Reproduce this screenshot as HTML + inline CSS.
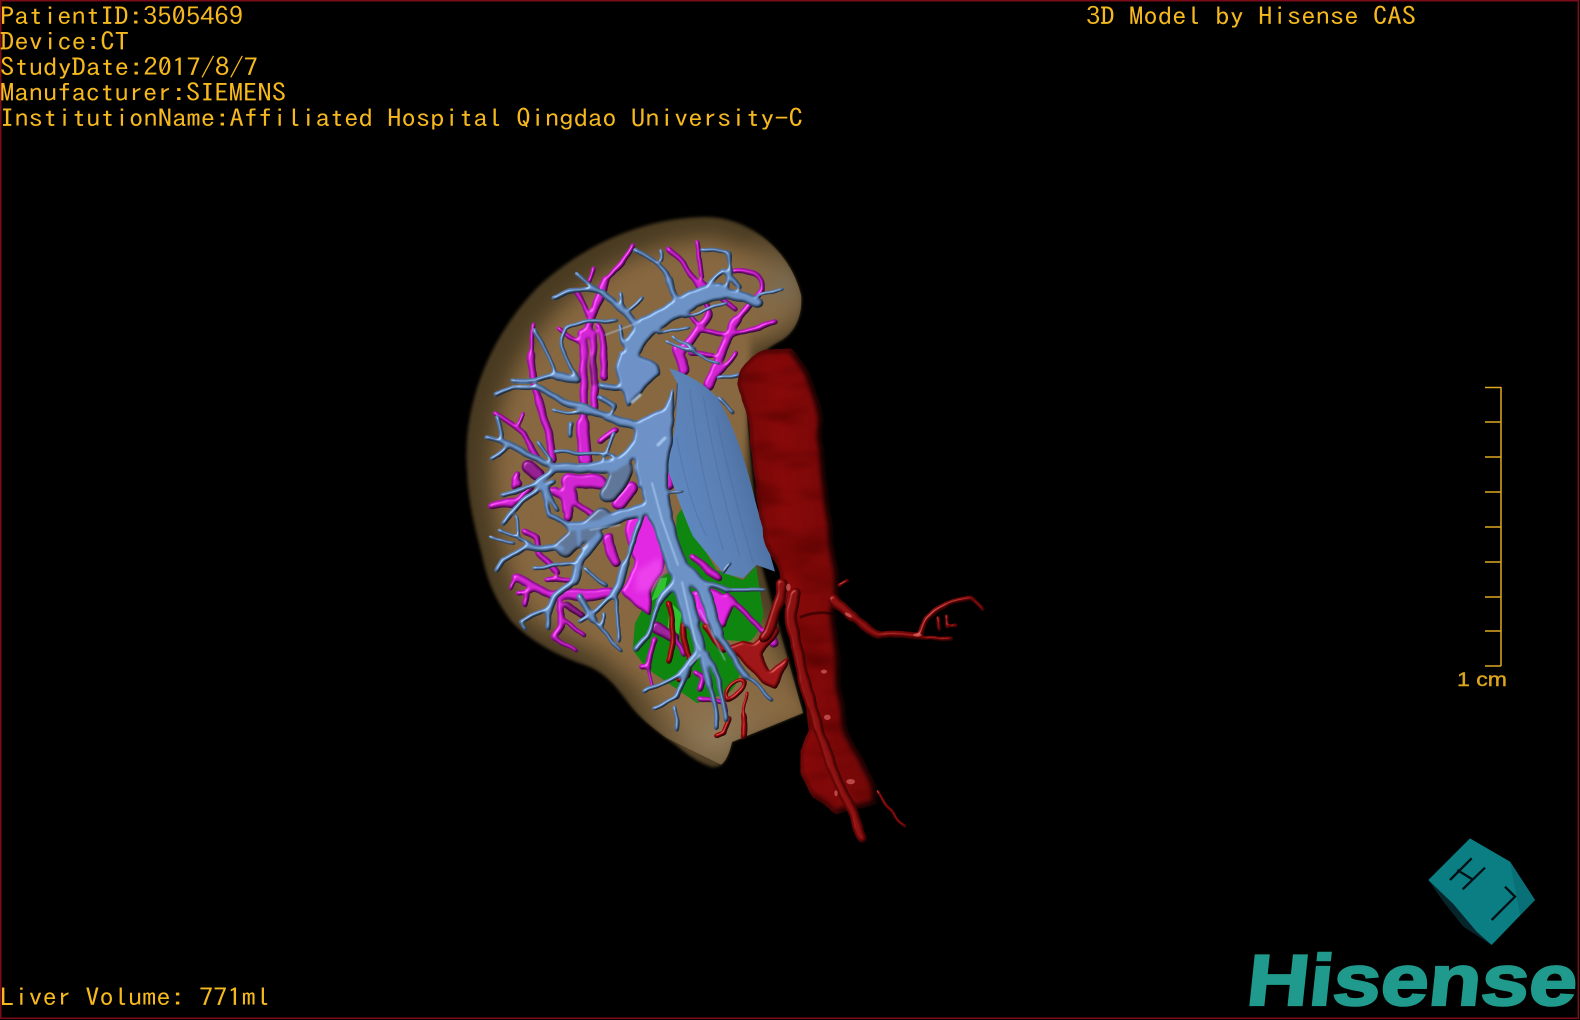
<!DOCTYPE html>
<html lang="en">
<head>
<meta charset="utf-8">
<title>3D Model by Hisense CAS</title>
<style>
html,body{margin:0;padding:0;background:#000;width:1580px;height:1020px;overflow:hidden}
svg{display:block;position:absolute;left:0;top:0}
.t{font-family:"IPAGothic","Liberation Mono",monospace;font-size:24.5px;fill:#f5b81e}
</style>
</head>
<body>
<svg width="1580" height="1020" viewBox="0 0 1580 1020" xmlns="http://www.w3.org/2000/svg">
<defs>
<clipPath id="liverClip"><path d="M467 470C462 405 490 335 540 285C590 240 650 217 707 217C750 218 790 250 801 295C803 315 795 332 782 340C760 352 745 365 745 395L760 560L803 713L732 742C728 760 722 768 712 767C700 763 690 757 676 745C655 730 640 718 630 705C615 685 605 672 585 665C555 655 530 640 512 622C495 600 487 580 482 555C474 525 468 500 467 470Z"/></clipPath>
<filter id="tube" filterUnits="userSpaceOnUse" x="0" y="0" width="1580" height="1020" color-interpolation-filters="sRGB">
  <feTurbulence type="fractalNoise" baseFrequency=".04" numOctaves="2" seed="7" result="n"/>
  <feDisplacementMap in="SourceGraphic" in2="n" scale="6" xChannelSelector="R" yChannelSelector="G" result="d"/>
  <feGaussianBlur in="d" stdDeviation="1" result="g0"/>
  <feColorMatrix in="g0" type="matrix" values="1 0 0 0 0  0 1 0 0 0  0 0 1 0 0  0 0 0 7 -1.6" result="g"/>
  <feGaussianBlur in="g" stdDeviation="1.5" result="b"/>
  <feDiffuseLighting in="b" surfaceScale="3" diffuseConstant="1.08" lighting-color="#ffffff" result="dl">
    <feDistantLight azimuth="225" elevation="68"/>
  </feDiffuseLighting>
  <feComposite in="g" in2="dl" operator="arithmetic" k1="1" k2="0" k3="0" k4="0" result="shaded"/>
  <feSpecularLighting in="b" surfaceScale="3" specularConstant=".9" specularExponent="22" lighting-color="#ffffff" result="s">
    <feDistantLight azimuth="225" elevation="40"/>
  </feSpecularLighting>
  <feComposite in="s" in2="g" operator="in" result="s2"/>
  <feComposite in="shaded" in2="s2" operator="arithmetic" k1="0" k2="1" k3=".4" k4="0"/>
</filter>
<filter id="aoF" filterUnits="userSpaceOnUse" x="0" y="0" width="1580" height="1020" color-interpolation-filters="sRGB">
  <feTurbulence type="fractalNoise" baseFrequency=".03" numOctaves="2" seed="3" result="n"/>
  <feDisplacementMap in="SourceGraphic" in2="n" scale="5" xChannelSelector="R" yChannelSelector="G" result="d"/>
  <feGaussianBlur in="d" stdDeviation="1" result="g0"/>
  <feColorMatrix in="g0" type="matrix" values="1 0 0 0 0  0 1 0 0 0  0 0 1 0 0  0 0 0 7 -1.6" result="g"/>
  <feGaussianBlur in="g" stdDeviation="4" result="b"/>
  <feDiffuseLighting in="b" surfaceScale="9" diffuseConstant="1.08" lighting-color="#ffffff" result="dl">
    <feDistantLight azimuth="200" elevation="68"/>
  </feDiffuseLighting>
  <feComposite in="g" in2="dl" operator="arithmetic" k1="1" k2="0" k3="0" k4="0"/>
</filter>
<filter id="soft" filterUnits="userSpaceOnUse" x="0" y="0" width="1580" height="1020"><feGaussianBlur stdDeviation="11"/></filter>
<filter id="soft2" filterUnits="userSpaceOnUse" x="0" y="0" width="1580" height="1020"><feGaussianBlur stdDeviation="1.5"/></filter>
<filter id="soft3" filterUnits="userSpaceOnUse" x="0" y="0" width="1580" height="1020"><feGaussianBlur stdDeviation="3"/></filter>
<filter id="soft1" filterUnits="userSpaceOnUse" x="0" y="0" width="1580" height="1020"><feGaussianBlur stdDeviation=".7"/></filter>
<filter id="rough" filterUnits="userSpaceOnUse" x="-4000" y="-4000" width="10000" height="10000" color-interpolation-filters="sRGB">
  <feTurbulence type="fractalNoise" baseFrequency=".006 .016" numOctaves="2" seed="4" result="n"/>
  <feColorMatrix in="n" type="matrix" values="0 0 0 0 .3  0 0 0 0 0  0 0 0 0 0  1.4 0 0 0 -.62" result="c"/>
  <feComposite in="c" in2="SourceAlpha" operator="in" result="c2"/>
  <feMerge><feMergeNode in="SourceGraphic"/><feMergeNode in="c2"/></feMerge>
</filter>
<linearGradient id="ivc" gradientUnits="userSpaceOnUse" x1="620" y1="800" x2="900" y2="720">
  <stop offset="0" stop-color="#5f88c0"/><stop offset=".55" stop-color="#5a7fb3"/><stop offset="1" stop-color="#48699a"/>
</linearGradient>
<linearGradient id="ao" gradientUnits="userSpaceOnUse" x1="60" y1="500" x2="360" y2="480">
  <stop offset="0" stop-color="#720707"/><stop offset=".45" stop-color="#880909"/><stop offset="1" stop-color="#760808"/>
</linearGradient>
<radialGradient id="lowfade" gradientUnits="userSpaceOnUse" cx="715" cy="735" r="100">
  <stop offset="0" stop-color="#8e7a5a" stop-opacity=".95"/><stop offset="1" stop-color="#87673f" stop-opacity="0"/>
</radialGradient>
<radialGradient id="topfade" gradientUnits="userSpaceOnUse" cx="785" cy="285" r="65">
  <stop offset="0" stop-color="#7b6c53" stop-opacity=".9"/><stop offset="1" stop-color="#87673f" stop-opacity="0"/>
</radialGradient>
</defs>

<!-- frame -->
<rect x=".75" y=".75" width="1577.5" height="1017.5" fill="none" stroke="#7a0c18" stroke-width="1.5"/>

<!-- liver -->
<path filter="url(#soft2)" fill="#4a3a24" d="M467 470C462 405 490 335 540 285C590 240 650 217 707 217C750 218 790 250 801 295C803 315 795 332 782 340C760 352 745 365 745 395L760 560L803 713L732 742C728 760 722 768 712 767C700 763 690 757 676 745C655 730 640 718 630 705C615 685 605 672 585 665C555 655 530 640 512 622C495 600 487 580 482 555C474 525 468 500 467 470Z"/>
<g clip-path="url(#liverClip)">
<path filter="url(#soft)" fill="#87673f" d="M492 470C492 405 520 345 562 305C610 262 660 240 710 238C750 245 790 270 800 300C795 325 770 335 745 350L730 400L750 600L820 720L700 750L640 690L600 655L530 620C505 575 492 520 492 470Z"/>
<path fill="#87673f" filter="url(#soft3)" d="M530 470C530 410 560 345 610 305L740 280L750 350L740 620L700 680L600 640L550 580Z"/>
<path fill="url(#lowfade)" d="M590 650L690 620L810 713L732 770L630 720Z"/>
<rect fill="url(#topfade)" x="700" y="210" width="110" height="140"/>
</g>

<!-- green -->
<g transform="translate(460,480) scale(.3333)">
<path fill="#0f860f" d="M650 110C660 90 680 70 690 70L705 160L770 270L850 300L888 258L910 400C905 440 885 480 862 486L800 480L840 580C830 620 810 640 800 640L712 670L640 620L560 565L518 510L525 430L600 290L622 280L642 270Z"/>
<path fill="#2bc62b" d="M572 365L600 295L622 292L612 340ZM632 368L665 400L655 470L622 450Z"/>
<path fill="#1ba81b" d="M690 100L715 145L730 190L700 160Z"/>
</g>

<!-- magenta vessels -->
<g filter="url(#tube)" fill="none" stroke="#c81cc8" stroke-linecap="round" stroke-linejoin="round">
<g transform="translate(460,210) scale(.3333)">
  <path stroke-width="40" d="M378 750L368 640"/>
  <path stroke-width="22" d="M368 640Q372 500 368 370"/>
  <path stroke-width="20" d="M402 600Q404 480 395 370"/>
  <path stroke="#8c1788" stroke-width="14" d="M400 520L398 440"/>
  <path stroke-width="18" d="M430 500Q442 420 415 350"/>
  <path stroke-width="20" d="M378 375Q400 310 430 240"/>
  <path stroke-width="24" d="M430 240L440 212"/>
  <path stroke-width="12" d="M440 212Q480 180 517 112"/>
  <path stroke-width="14" d="M385 320Q370 260 345 245"/>
  <path stroke-width="10" d="M390 215L402 172M296 352L360 395"/>
  <path stroke-width="22" d="M278 750Q265 650 235 570"/>
  <path stroke-width="18" d="M235 570Q210 500 214 430"/>
  <path stroke-width="10" d="M214 430L220 342"/>
  <path stroke-width="15" d="M110 610Q170 640 205 700L235 750"/>
  <path stroke-width="10" d="M170 650L190 610"/>
  <path stroke="#8c1788" stroke-width="40" d="M205 770L235 795"/>
  <path stroke-width="16" d="M170 790L160 830M285 840L345 870M215 830L175 870L95 884"/>
  <path stroke-width="40" d="M320 812L420 815"/>
  <path stroke-width="24" d="M318 815L318 900"/>
  <path stroke-width="16" d="M425 690L470 660"/>
  <path stroke-width="38" d="M510 835L475 885"/>
  <path stroke-width="24" d="M628 770L625 830"/>
  <path stroke-width="30" d="M672 480L652 420"/>
  <path stroke-width="24" d="M665 420Q712 380 745 310"/>
  <path stroke-width="14" d="M745 310Q735 220 625 115"/>
  <path stroke-width="11" d="M725 200L712 95"/>
  <path stroke-width="12" d="M722 215L825 298"/>
  <path stroke-width="30" d="M745 525L770 470"/>
  <path stroke-width="26" d="M770 470L800 390L830 330"/>
  <path stroke-width="16" d="M830 330L905 240"/>
  <path stroke-width="12" d="M905 240Q920 180 820 185"/>
  <path stroke-width="13" d="M800 380L895 355L945 335"/>
  <path stroke-width="12" d="M720 362L795 375M690 430L760 430M770 500L830 432"/>
  <path stroke-width="10" d="M658 285L710 340"/>
</g>
<g transform="translate(460,480) scale(.3333)">
  <path stroke-width="22" d="M175 10L165 -5M330 0L322 115"/>
  <path stroke-width="16" d="M270 30L330 60L400 105M345 35L345 70"/>
  <path stroke-width="17" d="M160 75L95 75"/>
  <path stroke-width="16" d="M195 155L235 170L240 220L290 280"/>
  <path stroke-width="26" d="M445 170Q450 220 470 250"/>
  <path stroke-width="28" d="M510 30L475 80"/>
  <path stroke-width="30" d="M452 342L360 345L280 345"/>
  <path stroke-width="22" d="M280 345Q220 320 170 290"/>
  <path stroke-width="12" d="M170 290L155 325M200 345L195 375M180 340L210 330"/>
  <path stroke-width="12" d="M260 298L335 300"/>
  <path stroke="#8c1788" stroke-width="16" d="M320 375L365 405"/>
  <path stroke-width="17" d="M300 370L305 440L285 470"/>
  <path stroke-width="11" d="M285 470L350 512M310 420L375 465"/>
  <path fill="#d81ed8" stroke="none" d="M500 130C510 110 535 85 555 80C585 100 595 130 600 170C612 210 615 240 605 270C590 300 572 320 575 350L572 405C555 400 520 370 490 345L480 335C495 310 530 260 530 240C510 210 495 170 500 130Z"/>
  <path fill="#d81ed8" stroke="none" d="M698 335L745 325L830 362L795 440L740 440L712 400Z"/>
  <path stroke-width="18" d="M700 232L775 295"/>
  <path stroke-width="14" d="M800 345L860 400L930 480"/>
  <path stroke-width="24" d="M925 445L938 490"/>
  <path stroke-width="10" d="M680 40L720 80L745 120"/>
  <path stroke="#951993" stroke-width="30" d="M590 445L640 470"/>
  <path stroke-width="12" d="M640 470L672 525"/>
  <path stroke-width="14" d="M585 480L562 555"/>
  <path stroke-width="14" d="M545 560L565 560"/>
  <path stroke-width="6" d="M565 570L580 625"/>
  <path stroke-width="16" d="M705 580L732 590L722 630"/>
  <path stroke-width="12" d="M720 658L790 670L795 695"/>
</g>
</g>
<path fill="#f048f0" filter="url(#soft3)" opacity=".75" d="M636 572L660 557L665 570L652 590L636 592Z"/>

<!-- small arteries behind blue -->
<g filter="url(#tube)" fill="none" stroke="#a50f12" stroke-linecap="round" stroke-linejoin="round">
<g transform="translate(460,480) scale(.3333)">
  <path stroke-width="14" d="M628 372Q645 470 630 540"/>
  <path stroke-width="14" d="M672 430Q660 490 690 530L680 590L655 600"/>
  <path stroke-width="18" d="M738 440L790 510"/>
  <path stroke-width="9" d="M800 660C800 610 850 590 855 605C862 630 820 655 800 660Z"/>
  <path stroke-width="11" d="M805 715L795 755L770 765"/>
  <path stroke-width="6" d="M862 640L850 700"/>
  <path stroke-width="16" d="M852 705L850 765"/>
  <path fill="#950d0f" stroke="none" d="M945 430L960 450L905 520L925 575L985 530L980 560L945 628L905 610L840 530L795 500L845 485L880 490L905 460Z"/>
</g>
</g>

<!-- IVC cylinder -->
<g transform="translate(460,210) scale(.3333)">
<path fill="url(#ivc)" d="M628 475C680 490 730 520 770 560C820 640 860 760 885 870L945 1085L890 1065L850 1105L790 1090L700 980C675 930 645 840 620 770C640 700 655 600 652 520Z"/>
<g fill="none" stroke="#3f6090" stroke-width="4" opacity=".28">
  <path d="M690 540Q720 800 790 1020M730 560Q770 800 840 1040M770 620Q810 820 880 1060M650 680Q680 860 740 980"/>
</g>
<path fill="none" stroke="#2f4c74" stroke-width="3" d="M652 520C650 590 640 620 620 650"/>
</g>

<!-- blue hepatic tree -->
<g filter="url(#tube)" fill="none" stroke="#6288bc" stroke-linecap="round" stroke-linejoin="round">
<g transform="translate(460,210) scale(.3333)">
  <path stroke="#566d90" stroke-width="56" d="M490 780L445 850"/>
  <path stroke-width="18" d="M530 345L490 300L430 250"/>
  <path stroke-width="12" d="M430 250Q360 225 280 262"/>
  <path stroke-width="9" d="M440 260L350 190M495 310L480 250M510 300L550 265"/>
  <path stroke-width="56" d="M520 410L560 350L640 300"/>
  <path stroke-width="50" d="M640 300L700 265L780 245"/>
  <path stroke-width="32" d="M780 245L860 262L890 280"/>
  <path stroke-width="18" d="M650 265L630 210"/>
  <path stroke-width="11" d="M630 210Q600 150 525 125"/>
  <path stroke-width="8" d="M600 150L602 118M725 120L800 125L815 190"/>
  <path stroke-width="12" d="M750 220L790 180L840 230"/>
  <path stroke-width="9" d="M810 130L805 230"/>
  <path stroke-width="6" d="M665 320L800 280M890 255L970 236M595 368L690 350M620 395L780 460M705 420L640 380"/>
  <path stroke-width="9" d="M775 505L840 490M775 560L820 605"/>
  <path stroke-width="9" d="M470 330Q380 335 320 350Q290 420 350 495"/>
  <path stroke-width="12" d="M530 410L490 400L480 350"/>
  <path fill="#6488be" stroke="none" d="M480 425L520 430C550 440 580 450 590 465L598 495L560 530L530 560L508 590L475 530L468 470Z"/>
  <path fill="#6488be" stroke="none" d="M525 640L610 595L640 530L642 625L625 770L620 830L530 830L520 700Z"/>
  <path stroke-width="26" d="M530 650L440 620"/>
  <path stroke-width="18" d="M440 620L330 580L230 530"/>
  <path stroke-width="10" d="M230 530L160 530L110 555"/>
  <path stroke-width="20" d="M350 510L285 492"/>
  <path stroke-width="11" d="M285 492L225 510L160 510"/>
  <path stroke-width="10" d="M285 490L260 430L225 360"/>
  <path stroke-width="16" d="M420 525L480 530M420 562L465 585"/>
  <path stroke-width="7" d="M280 600L390 610M470 590L445 620"/>
  <path stroke-width="12" d="M335 640L330 680"/>
  <path stroke-width="34" d="M540 700Q490 770 400 775"/>
  <path stroke-width="26" d="M400 775L290 775"/>
  <path stroke-width="16" d="M290 775L190 725L130 700"/>
  <path stroke-width="10" d="M130 700L78 680M125 695L115 620M145 712L95 745"/>
  <path stroke-width="17" d="M290 775L230 825"/>
  <path stroke-width="11" d="M230 825L125 855M260 835L290 900"/>
  <path stroke-width="8" d="M285 725L465 735M430 745L465 670M230 700L275 750"/>
</g>
<g transform="translate(460,480) scale(.3333)">
  <path stroke="#566d90" stroke-width="54" d="M425 115L310 205"/>
  <path stroke-width="74" d="M570 -20L600 100"/>
  <path stroke-width="64" d="M600 100L650 260"/>
  <path stroke-width="50" d="M660 300L695 420"/>
  <path stroke-width="32" d="M695 420L720 510"/>
  <path stroke-width="20" d="M720 510L660 585"/>
  <path stroke-width="10" d="M660 585L552 632"/>
  <path stroke-width="14" d="M695 535L650 650"/>
  <path stroke-width="9" d="M650 650L580 690M645 680L652 750"/>
  <path stroke-width="20" d="M730 520L750 620"/>
  <path stroke-width="12" d="M750 620L772 740"/>
  <path stroke-width="13" d="M745 520L780 610L795 720"/>
  <path stroke-width="38" d="M660 260L730 320"/>
  <path stroke-width="32" d="M725 320L775 460"/>
  <path stroke-width="18" d="M775 460L860 590"/>
  <path stroke-width="9" d="M860 590L935 660"/>
  <path stroke-width="14" d="M735 310L800 330"/>
  <path stroke-width="8" d="M800 330L915 330M790 278L815 250"/>
  <path stroke-width="20" d="M650 300L600 370"/>
  <path stroke-width="13" d="M600 370L565 470L530 510"/>
  <path stroke-width="32" d="M550 85L430 130"/>
  <path stroke-width="24" d="M430 130L330 140"/>
  <path stroke-width="14" d="M330 140L265 105L250 30"/>
  <path stroke-width="24" d="M420 165L360 240"/>
  <path stroke-width="26" d="M360 240L345 305"/>
  <path stroke-width="13" d="M545 100L500 250"/>
  <path stroke-width="22" d="M500 250L460 350"/>
  <path stroke-width="12" d="M460 350L360 425"/>
  <path stroke-width="10" d="M470 360L475 480"/>
  <path stroke-width="18" d="M360 350L400 420"/>
  <path stroke-width="9" d="M400 420L482 512M430 400L425 440"/>
  <path stroke-width="18" d="M330 315L285 345L265 400"/>
  <path stroke-width="14" d="M265 400L265 445"/>
  <path stroke-width="10" d="M265 385L180 425L195 450"/>
  <path stroke-width="18" d="M300 205L200 200"/>
  <path stroke-width="12" d="M200 200L130 240L110 270"/>
  <path stroke-width="7" d="M235 200L120 150M160 190L90 168M180 180L165 110"/>
  <path stroke-width="9" d="M340 250L220 265M380 265L435 320"/>
  <path stroke-width="12" d="M280 5L190 60L130 130M190 30L130 45M360 150L360 200"/>
  <path stroke-width="6" d="M625 40L670 38"/>
</g>
</g>
<!-- blue highlights -->
<g filter="url(#soft1)" fill="none" stroke="#b4d4f8" stroke-linecap="round" opacity=".8">
  <path stroke-width="1.5" d="M652 483L662 520L678 565M682 582L695 640L700 650M700 655L690 665"/>
  <path stroke-width="3" d="M658 445L665 438M632 402L640 395"/>
  <path stroke-width="1" d="M620 525L590 530M700 610L725 660M605 335L640 322"/>
</g>

<!-- aorta -->
<g filter="url(#aoF)" stroke-linecap="round" stroke-linejoin="round">
<g transform="translate(720,340) scale(.3333)">
  <g filter="url(#rough)">
  <path fill="url(#ao)" d="M58 130C60 90 80 55 130 35L215 28C245 60 260 85 268 105C290 160 305 210 305 230L318 430L355 700L360 790L340 810L358 920L365 1040L385 1180C420 1250 460 1310 470 1340L470 1390L350 1420L280 1370L245 1300L240 1235L270 1170L250 1040L225 880L200 790L175 690C150 640 130 600 130 570C110 480 105 430 105 430L90 250Z"/>
  </g>
</g>
</g>
<g filter="url(#tube)" stroke-linecap="round" stroke-linejoin="round">
<g transform="translate(720,340) scale(.3333)">
  <g fill="none" stroke="#820808">
    <path stroke-width="32" d="M225 760Q205 830 225 900L272 1100"/>
    <path stroke-width="28" d="M272 1100L340 1290L430 1490"/>
    <path stroke-width="30" d="M185 730Q180 830 130 890"/>
    <path stroke-width="30" d="M340 780L400 830"/>
    <path stroke-width="20" d="M400 830L475 888"/>
    <path stroke-width="17" d="M475 888L600 885"/>
    <path stroke-width="14" d="M600 885Q620 810 680 790"/>
    <path stroke-width="10" d="M680 790L755 772"/>
    <path stroke-width="8" d="M755 772L785 815M610 890L690 896M655 870L650 832M680 862L680 825M680 860L708 856M360 740L382 725"/>
    <path stroke-width="5" d="M470 1350L552 1462"/>
  </g>
</g>
</g>
<g transform="translate(720,340) scale(.3333)">
  <path fill="none" stroke="#140000" stroke-width="8" d="M240 832C280 815 320 815 345 825" opacity=".55"/>
  <g fill="#e87070" opacity=".6">
    <ellipse cx="205" cy="742" rx="7" ry="11"/><ellipse cx="312" cy="995" rx="9" ry="6"/>
    <ellipse cx="322" cy="1132" rx="10" ry="8"/><ellipse cx="392" cy="1325" rx="13" ry="8"/>
    <ellipse cx="348" cy="1360" rx="5" ry="9"/><ellipse cx="592" cy="885" rx="12" ry="5"/>
    <ellipse cx="385" cy="825" rx="12" ry="5" transform="rotate(30 385 825)"/>
  </g>
</g>

<!-- scale bar -->
<g fill="none" stroke="#e0a720" stroke-width="1.5">
<path d="M1501 387V666M1485 387.5H1501M1485 422H1501M1485 457H1501M1485 492H1501M1485 527H1501M1485 562H1501M1485 597H1501M1485 631H1501M1485 666H1501"/>
</g>
<text x="1457" y="686" font-family="Liberation Sans, sans-serif" font-size="19" fill="#dba51c" stroke="#dba51c" stroke-width=".4" textLength="50" lengthAdjust="spacingAndGlyphs">1 cm</text>

<!-- text overlays -->
<text class="t" x="0" y="25" textLength="243" lengthAdjust="spacingAndGlyphs">PatientID:3505469</text>
<text class="t" x="0" y="50.5" textLength="129" lengthAdjust="spacingAndGlyphs">Device:CT</text>
<text class="t" x="0" y="76" textLength="258" lengthAdjust="spacingAndGlyphs">StudyDate:2017/8/7</text>
<text class="t" x="0" y="101.5" textLength="286" lengthAdjust="spacingAndGlyphs">Manufacturer:SIEMENS</text>
<text class="t" x="0" y="127" textLength="803" lengthAdjust="spacingAndGlyphs">InstitutionName:Affiliated Hospital Qingdao University-C</text>
<text class="t" x="1086" y="25" textLength="330" lengthAdjust="spacingAndGlyphs">3D Model by Hisense CAS</text>
<text class="t" x="0" y="1006" textLength="270" lengthAdjust="spacingAndGlyphs">Liver Volume: 771ml</text>

<!-- cube logo -->
<g transform="translate(1420,830) scale(.3333)">
<path fill="#06262c" d="M25 150L70 215L130 290L215 345L170 300L100 215Z"/>
<path fill="#0b7e84" d="M150 25L270 95L345 210L215 345L170 305L100 222L25 150Z"/>
<path fill="#0a7077" d="M270 95L345 210L300 255Z"/>
<g fill="none" stroke="#021015" stroke-width="7">
<path d="M90 150L155 85M128 178L195 113M112 120L160 150"/>
<path d="M255 170L285 200L215 270"/>
</g>
</g>

<!-- Hisense wordmark -->
<g transform="translate(1245,1005) skewX(-6)">
<text x="0" y="0" font-family="Liberation Sans, sans-serif" font-weight="700" font-size="72" fill="#1f9a8c" stroke="#1f9a8c" stroke-width="2.2" textLength="330" lengthAdjust="spacingAndGlyphs">Hisense</text>
</g>
</svg>
</body>
</html>
